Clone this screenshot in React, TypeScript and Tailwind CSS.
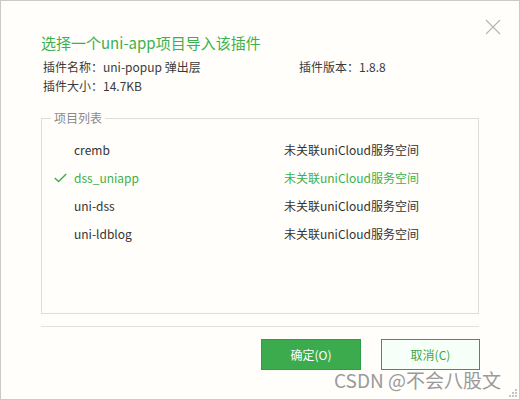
import React, { useState } from 'react';

const PROJECTS = [
  { name: 'cremb', status: '未关联uniCloud服务空间' },
  { name: 'dss_uniapp', status: '未关联uniCloud服务空间' },
  { name: 'uni-dss', status: '未关联uniCloud服务空间' },
  { name: 'uni-ldblog', status: '未关联uniCloud服务空间' },
];

const font = { fontFamily: '"Noto Sans CJK SC", "Noto Sans", sans-serif' };

const App: React.FC = () => {
  const [selected, setSelected] = useState('dss_uniapp');

  return (
    <div
      className="relative w-[520px] h-[400px] border border-[#cacaca] bg-[#fffefb] text-[#333333] overflow-hidden"
      style={font}
    >
      <button className="absolute top-[18px] right-[18px] w-[16px] h-[16px] text-[#b4b4b4]">
        <svg viewBox="0 0 16 16" className="w-4 h-4" fill="none" stroke="currentColor" strokeWidth="1.1">
          <path d="M1 1L15 15M15 1L1 15" />
        </svg>
      </button>

      <div className="pl-[40px] pt-[32px] w-[480px]">
        <h1 className="text-[15px] leading-[20px] text-[#3bb04d] font-normal">选择一个uni-app项目导入该插件</h1>

        <div className="mt-[4px] pl-[2px] grid grid-cols-[256px_1fr] text-[12px] leading-[19px] text-[#3a3a3a]">
          <div>插件名称：uni-popup 弹出层</div>
          <div>插件版本：1.8.8</div>
          <div>插件大小：14.7KB</div>
        </div>

        <fieldset className="mt-[14px] w-[438px] h-[205px] border border-[#dedede]">
          <legend className="ml-[9px] px-[3px] text-[12px] leading-[18px] text-[#8a8a8a]">项目列表</legend>
          <div className="pt-[9px]">
            {PROJECTS.map(p => {
              const active = p.name === selected;
              return (
                <div
                  key={p.name}
                  onClick={() => setSelected(p.name)}
                  className={`flex items-center h-[28px] text-[12px] cursor-pointer ${active ? 'text-[#3bb04d]' : 'text-[#333333]'}`}
                >
                  <span className="w-[32px] flex items-center pl-[12px]">
                    {active && (
                      <svg viewBox="0 0 13 10" className="w-[13px] h-[10px]" fill="none" stroke="#3bb04d" strokeWidth="1.4">
                        <path d="M0.8 5L4.6 8.6L12.2 1" />
                      </svg>
                    )}
                  </span>
                  <span className="w-[210px]">{p.name}</span>
                  <span>{p.status}</span>
                </div>
              );
            })}
          </div>
        </fieldset>

        <div className="mt-[12px] w-[438px] h-px bg-[#e2e2e2]" />

        <div className="mt-[12px] w-[439px] flex justify-end gap-[20px] text-[12px]">
          <button className="w-[100px] h-[31px] bg-[#3bab4e] border border-[#2b9f45] text-white">确定(O)</button>
          <button className="w-[99px] h-[31px] bg-[#f7fff9] border border-[#2ca247] text-[#3aa64c]">取消(C)</button>
        </div>
      </div>

      <div
        className="absolute left-[333px] top-[366px] text-[19px] leading-[26px] text-[#9a9a9a] pointer-events-none"
        style={{ ...font, textShadow: '0 0 2px #ffffff' }}
      >
        CSDN @不会八股文
      </div>

      <svg className="absolute right-[1px] bottom-[1px]" width="10" height="10" viewBox="0 0 10 10" fill="#c4c4c4">
        <rect x="7" y="1" width="2" height="2" />
        <rect x="4" y="4" width="2" height="2" />
        <rect x="7" y="4" width="2" height="2" />
        <rect x="1" y="7" width="2" height="2" />
        <rect x="4" y="7" width="2" height="2" />
        <rect x="7" y="7" width="2" height="2" />
      </svg>
    </div>
  );
};

export default App;
